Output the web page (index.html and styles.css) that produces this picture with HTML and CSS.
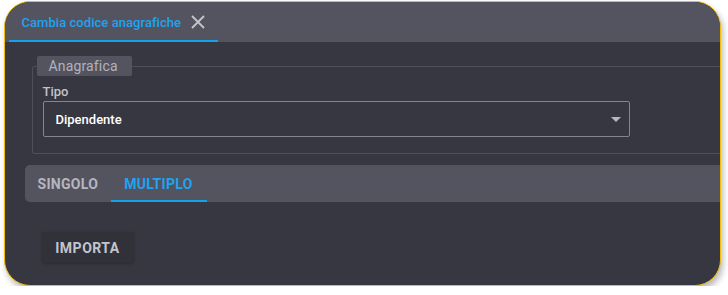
FILE: index.html
```html
<!DOCTYPE html>
<html lang="it">
<head>
<meta charset="utf-8">
<link rel="stylesheet" href="styles.css">
</head>
<body>
<div class="frame">
  <div class="tabhead">
    <div class="tab">
      <span class="tab-label">Cambia codice anagrafiche</span>
      <svg class="close" width="14" height="14" viewBox="0 0 14 14"><path d="M1 1 L13 13 M13 1 L1 13" stroke="#c4c4cc" stroke-width="1.8" fill="none"/></svg>
    </div>
  </div>
  <div class="content">
    <fieldset class="group">
      <legend class="legend">Anagrafica</legend>
      <div class="field-label">Tipo</div>
      <div class="select">
        <span class="select-value">Dipendente</span>
        <svg class="caret" width="10" height="5" viewBox="0 0 10 5"><path d="M0 0 L10 0 L5 5 Z" fill="#b8b8c0"/></svg>
      </div>
    </fieldset>
    <div class="subtabs">
      <div class="subtab">SINGOLO</div>
      <div class="subtab active">MULTIPLO</div>
    </div>
    <div class="actions">
      <button class="btn">IMPORTA</button>
    </div>
  </div>
</div>
</body>
</html>
```
FILE: styles.css
```css
html, body {
  margin: 0;
  padding: 0;
  background: #ffffff;
}
body {
  font-family: Roboto, "Liberation Sans", sans-serif;
}
.frame {
  margin: 1px 0 0 4px;
  width: 717px;
  height: 285px;
  border: 1.5px solid #f2bd0f;
  border-radius: 26px;
  overflow: hidden;
  background: #373741;
  box-shadow: 2px 4px 6px rgba(0, 0, 0, 0.28);
  box-sizing: border-box;
  display: flex;
  flex-direction: column;
}
.tabhead {
  height: 40px;
  flex: none;
  background: #545461;
  display: flex;
  align-items: flex-end;
  padding-left: 3.5px;
}
.tab {
  width: 209px;
  height: 40px;
  box-sizing: border-box;
  border-bottom: 2px solid #0ea3ec;
  display: flex;
  align-items: center;
  padding-left: 13px;
  padding-top: 2px;
}
.tab-label {
  color: #1fa3f0;
  font-size: 13px;
  font-weight: 500;
  letter-spacing: 0.05px;
}
.close {
  margin-left: 10px;
}
.content {
  padding: 14px 0 0 26.5px;
  width: 760px;
}
.group {
  margin: 0;
  border: 1px solid #4f4f5a;
  border-radius: 2px;
  padding: 0 10px 16px 10px;
  width: 740px;
  box-sizing: border-box;
  min-width: 0;
}
.legend {
  background: #545461;
  color: #b2b2ba;
  font-size: 14px;
  padding: 2px 14px 2px 12px;
  margin-left: -6px;
  border-radius: 2px;
  line-height: 16px;
  letter-spacing: 0.15px;
}
.field-label {
  color: #c2c2ca;
  font-size: 13px;
  font-weight: 500;
  line-height: 16px;
  margin-top: 8px;
  margin-bottom: 1px;
}
.select {
  width: 587px;
  height: 36px;
  box-sizing: border-box;
  border: 1px solid #85858f;
  border-radius: 2px;
  display: flex;
  align-items: center;
  justify-content: space-between;
  padding: 0 8px 0 12px;
}
.select-value {
  color: #ffffff;
  font-size: 13px;
  font-weight: 500;
}
.caret {
  margin-top: 1px;
}
.subtabs {
  margin: 11px 0 0 -7px;
  height: 37px;
  background: #545461;
  border-radius: 5px 0 0 5px;
  display: flex;
  padding-left: 0;
}
.subtab {
  height: 37px;
  box-sizing: border-box;
  display: flex;
  align-items: center;
  padding: 2px 13px 0 13px;
  color: #b6b6be;
  font-size: 14px;
  font-weight: 700;
  letter-spacing: 0.3px;
  border-bottom: 2px solid transparent;
}
.subtab.active {
  color: #1fa3f0;
  border-bottom-color: #0ea3ec;
  padding: 2px 14px 0 13px;
}
.actions {
  padding: 30px 0 0 10px;
}
.btn {
  height: 31px;
  width: 92px;
  background: #31313a;
  border: none;
  border-radius: 3px;
  color: #c4c4cc;
  font-family: Roboto, "Liberation Sans", sans-serif;
  font-size: 14px;
  font-weight: 700;
  letter-spacing: 0.5px;
  box-shadow: 0 1px 3px rgba(0, 0, 0, 0.25);
  padding: 0;
}
```
